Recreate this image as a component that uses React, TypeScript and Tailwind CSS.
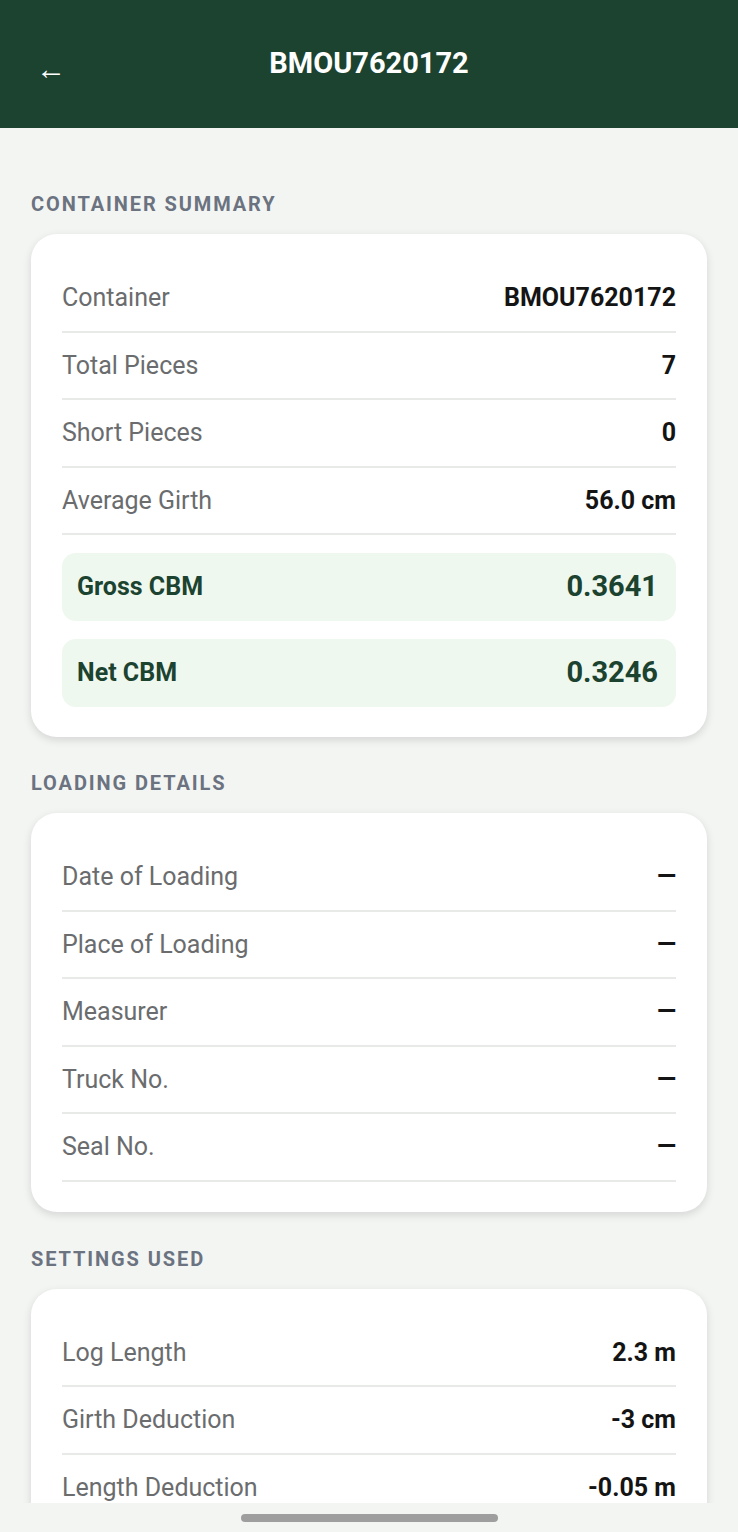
import type { ReactNode } from "react";

type Row = { label: string; value: string };

const summaryRows: Row[] = [
  { label: "Container", value: "BMOU7620172" },
  { label: "Total Pieces", value: "7" },
  { label: "Short Pieces", value: "0" },
  { label: "Average Girth", value: "56.0 cm" },
];

const loadingRows: Row[] = [
  { label: "Date of Loading", value: "—" },
  { label: "Place of Loading", value: "—" },
  { label: "Measurer", value: "—" },
  { label: "Truck No.", value: "—" },
  { label: "Seal No.", value: "—" },
];

const settingsRows: Row[] = [
  { label: "Log Length", value: "2.3 m" },
  { label: "Girth Deduction", value: "-3 cm" },
  { label: "Length Deduction", value: "-0.05 m" },
];

function SectionLabel({ children }: { children: ReactNode }) {
  return (
    <h2 className="h-6 text-[20px] font-bold leading-6 tracking-[1.9px] text-[#6b7280] uppercase">
      {children}
    </h2>
  );
}

function Card({ children }: { children: ReactNode }) {
  return (
    <div className="mt-[18px] rounded-[26px] bg-white px-[31px] pt-[31px] pb-[30px] shadow-[0_3px_8px_rgba(0,0,0,0.13)]">
      {children}
    </div>
  );
}

function InfoRow({ label, value }: Row) {
  return (
    <div className="flex h-[67.5px] items-center justify-between border-b-2 border-[#e8eae8]">
      <span className="text-[25px] text-[#6a6c6e]">{label}</span>
      <span className="text-[25px] font-bold text-[#141414]">{value}</span>
    </div>
  );
}

function TotalBox({ label, value }: Row) {
  return (
    <div className="flex h-[68px] items-center justify-between rounded-[14px] bg-[#eef8ef] pr-[18px] pl-[15px]">
      <span className="text-[25px] font-bold text-[#1c4230]">{label}</span>
      <span className="text-[29px] font-bold text-[#1c4230]">{value}</span>
    </div>
  );
}

export default function App() {
  return (
    <div className="flex h-[1532px] w-full flex-col overflow-hidden bg-[#f3f5f3] font-['Roboto',sans-serif]">
      <header className="relative flex h-[128px] shrink-0 items-center justify-center bg-[#1c4230]">
        <button className="absolute top-[54px] left-[36px] text-[30px] leading-none text-white">
          ←
        </button>
        <h1 className="text-[29px] font-bold text-white">BMOU7620172</h1>
      </header>

      <main className="flex-1 overflow-hidden px-[31px] pt-[64px]">
        <SectionLabel>Container Summary</SectionLabel>
        <Card>
          {summaryRows.map((r) => (
            <InfoRow key={r.label} {...r} />
          ))}
          <div className="mt-[18px] flex flex-col gap-[18px]">
            <TotalBox label="Gross CBM" value="0.3641" />
            <TotalBox label="Net CBM" value="0.3246" />
          </div>
        </Card>

        <div className="mt-[34px]">
          <SectionLabel>Loading Details</SectionLabel>
        </div>
        <Card>
          {loadingRows.map((r) => (
            <InfoRow key={r.label} {...r} />
          ))}
        </Card>

        <div className="mt-[35px]">
          <SectionLabel>Settings Used</SectionLabel>
        </div>
        <Card>
          {settingsRows.map((r) => (
            <InfoRow key={r.label} {...r} />
          ))}
        </Card>
      </main>

      <footer className="flex h-[29px] shrink-0 justify-center bg-[#f3f5f3] pt-[11px]">
        <div className="h-2 w-[257px] rounded-full bg-[#9e9e9e]" />
      </footer>
    </div>
  );
}
